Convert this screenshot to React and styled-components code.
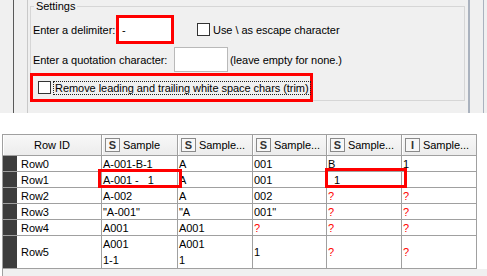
import styled, { createGlobalStyle } from 'styled-components';

const GlobalStyle = createGlobalStyle`
  html, body {
    margin: 0;
    padding: 0;
    background: #fff;
  }
  body {
    width: 487px;
    font-family: "Liberation Sans", Arial, sans-serif;
    font-size: 11px;
    letter-spacing: -0.05px;
    color: #000;
  }
`;

const columns = [
  { type: 'S', name: 'Sample' },
  { type: 'S', name: 'Sample...' },
  { type: 'S', name: 'Sample...' },
  { type: 'S', name: 'Sample...' },
  { type: 'I', name: 'Sample...' },
];

// null = missing value (red question mark)
const rows = [
  { id: 'Row0', cells: ['A-001-B-1', 'A', '001', 'B', '1'] },
  { id: 'Row1', cells: ['A-001 -   1', 'A', '001', '  1', ''] },
  { id: 'Row2', cells: ['A-002', 'A', '002', null, null] },
  { id: 'Row3', cells: ['"A-001"', '"A', '001"', null, null] },
  { id: 'Row4', cells: ['A001', 'A001', null, null, null] },
  { id: 'Row5', cells: ['A001\n1-1', 'A001\n1', '1', null, null], tall: true },
];

// red annotation boxes in the table, keyed "row:col"
const marks = {
  '1:0': { l: -4, t: -3, w: 84, h: 19 },
  '1:3': { l: -2, t: -4, w: 82, h: 20 },
};

export default function App() {
  return (
    <>
      <GlobalStyle />
      <TopArea>
        <Frame>
          <Panel>
            <Group>
              <Legend>Settings</Legend>
              <OptionRow $h={29} $mt={3}>
                <Label $w={83}>Enter a delimiter:</Label>
                <TextBox $w={58} $h={29} $marked>-</TextBox>
                <CheckBox $ml={23} />
                <CheckText>Use \ as escape character</CheckText>
              </OptionRow>
              <OptionRow $h={25} $mt={3}>
                <Label $w={141}>Enter a quotation character:</Label>
                <TextBox $w={54} $h={25} />
                <Hint>(leave empty for none.)</Hint>
              </OptionRow>
              <TrimRow>
                <CheckBox />
                <FocusLabel>Remove leading and trailing white space chars (trim)</FocusLabel>
              </TrimRow>
            </Group>
          </Panel>
        </Frame>
      </TopArea>
      <TableArea>
        <Table>
          <HeadCell $center>Row ID</HeadCell>
          {columns.map((col, i) => (
            <HeadCell key={i}>
              <TypeIcon>{col.type}</TypeIcon>
              <span>{col.name}</span>
            </HeadCell>
          ))}
          {rows.map((row, r) => (
            <Row key={row.id} $tall={row.tall}>
              <IdCell>
                <Handle />
                <span>{row.id}</span>
              </IdCell>
              {row.cells.map((value, c) => {
                const mark = marks[`${r}:${c}`];
                return (
                  <Cell key={c}>
                    {value === null ? <Missing>?</Missing> : value}
                    {mark && <Mark $l={mark.l} $t={mark.t} $w={mark.w} $h={mark.h} />}
                  </Cell>
                );
              })}
            </Row>
          ))}
        </Table>
        <Footer />
      </TableArea>
    </>
  );
}

const TopArea = styled.div`
  height: 113px;
  background: #f0f0f0;
  display: flex;
`;

const Frame = styled.div`
  margin-left: 13px;
  border-left: 1px solid #5a5a5a;
  border-right: 1px solid #aab2be;
  padding: 0 13px;
  display: flex;
`;

const Panel = styled.div`
  border-left: 1px solid #c9c9c9;
  border-right: 2px solid #aab2be;
  padding: 0 3px 0 2px;
`;

const Group = styled.fieldset`
  width: 435px;
  box-sizing: border-box;
  margin: 0;
  padding: 0 0 0 2px;
  border: 1px solid #d6d6d6;
  min-width: 0;
`;

const Legend = styled.legend`
  margin-left: 1px;
  padding: 0 2px;
  line-height: 12px;
`;

const OptionRow = styled.div`
  display: flex;
  align-items: center;
  height: ${(p) => p.$h}px;
  margin-top: ${(p) => p.$mt}px;
`;

const Label = styled.span`
  width: ${(p) => p.$w}px;
  flex-shrink: 0;
  white-space: nowrap;
`;

const TextBox = styled.div`
  box-sizing: border-box;
  width: ${(p) => p.$w}px;
  height: ${(p) => p.$h}px;
  background: #fff;
  border: ${(p) => (p.$marked ? '3px solid #ff0000' : '1px solid #b9b9b9')};
  padding-left: 3px;
  display: flex;
  align-items: center;
`;

const CheckBox = styled.span`
  box-sizing: border-box;
  width: 13px;
  height: 13px;
  background: #fff;
  border: 1px solid #333;
  flex-shrink: 0;
  margin-left: ${(p) => p.$ml || 0}px;
`;

const CheckText = styled.span`
  margin-left: 3px;
  white-space: nowrap;
`;

const Hint = styled.span`
  margin-left: 2px;
  white-space: nowrap;
`;

const TrimRow = styled.div`
  box-sizing: border-box;
  display: flex;
  align-items: center;
  width: 283px;
  height: 29px;
  margin: 1px 0 -2px -3px;
  padding-left: 5px;
  border: 3px solid #ff0000;
`;

const FocusLabel = styled.span`
  margin-left: 2px;
  padding: 0 1px 0 1px;
  line-height: 12px;
  border: 1px dotted #222;
  white-space: nowrap;
`;

const TableArea = styled.div`
  background: #fff;
  padding-top: 21px;
`;

const Table = styled.div`
  display: grid;
  grid-template-columns: 99px 76px 75px 74px 75px 75px;
  width: max-content;
  margin-left: 2px;
  border-left: 1px solid #a0a0a0;
  border-top: 1px solid #a0a0a0;
`;

const HeadCell = styled.div`
  box-sizing: border-box;
  height: 21px;
  display: flex;
  align-items: center;
  justify-content: ${(p) => (p.$center ? 'center' : 'flex-start')};
  padding-left: ${(p) => (p.$center ? 0 : 3)}px;
  background: linear-gradient(#f8f8f8, #ececec);
  border-right: 1px solid #a0a0a0;
  border-bottom: 1px solid #a0a0a0;
  box-shadow: inset 1px 0 #fff;
  white-space: nowrap;
  overflow: hidden;
`;

const TypeIcon = styled.span`
  box-sizing: border-box;
  width: 15px;
  height: 14px;
  margin-right: 3px;
  border: 1px solid #8a8a8a;
  background: #f7f7f7;
  display: flex;
  align-items: center;
  justify-content: center;
  font-weight: bold;
  font-size: 11px;
  color: #333;
`;

const Row = styled.div`
  display: contents;
  & > div {
    height: ${(p) => (p.$tall ? 33 : 16)}px;
  }
`;

const IdCell = styled.div`
  box-sizing: border-box;
  display: flex;
  align-items: center;
  background: #fff;
  border-right: 1px solid #a0a0a0;
  border-bottom: 1px solid #a0a0a0;
  span {
    margin-left: 4px;
  }
`;

const Handle = styled.div`
  width: 14px;
  align-self: stretch;
  background: #3d3d3d;
`;

const Cell = styled.div`
  position: relative;
  box-sizing: border-box;
  display: flex;
  align-items: center;
  padding-left: 1px;
  line-height: 16px;
  white-space: pre;
  background: #fff;
  border-right: 1px solid #a0a0a0;
  border-bottom: 1px solid #a0a0a0;
`;

const Missing = styled.span`
  color: #ff0000;
`;

const Mark = styled.div`
  position: absolute;
  left: ${(p) => p.$l}px;
  top: ${(p) => p.$t}px;
  width: ${(p) => p.$w}px;
  height: ${(p) => p.$h}px;
  box-sizing: border-box;
  border: 3px solid #ff0000;
  z-index: 1;
  pointer-events: none;
`;

const Footer = styled.div`
  height: 10px;
  margin-left: 2px;
  background: #f0f0f0;
  border-left: 1px solid #a0a0a0;
`;
